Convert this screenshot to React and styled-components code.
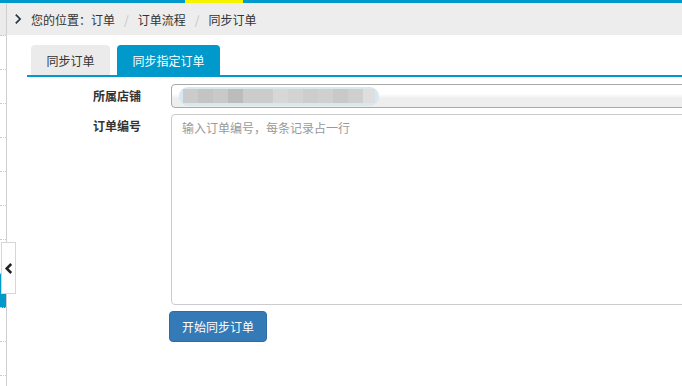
import React from "react";
import styled, { createGlobalStyle } from "styled-components";

const GlobalStyle = createGlobalStyle`
    html, body {
        margin: 0;
        padding: 0;
        background: #fff;
        overflow: hidden;
    }
    body {
        font-family: "Noto Sans CJK SC", "Noto Sans", sans-serif;
        font-size: 12px;
        color: #333;
    }
`;

const Page = styled.div`
    width: 682px;
    height: 386px;
    display: flex;
    flex-direction: column;
    overflow: hidden;
`;

const TopBar = styled.div`
    height: 3px;
    background: #0099cc;
    display: flex;
    padding-left: 185px;
    flex-shrink: 0;
`;

const TopMark = styled.div`
    width: 58px;
    height: 3px;
    background: #f5f500;
`;

const Body = styled.div`
    flex: 1;
    display: flex;
    min-height: 0;
`;

const Sidebar = styled.div`
    position: relative;
    width: 6px;
    border-right: 1px solid #cfcfcf;
    display: flex;
    flex-direction: column;
    flex-shrink: 0;
`;

const SideHead = styled.div`
    height: 32px;
    background: #ebebeb;
    border-bottom: 1px dotted #ccc;
`;

const SideItem = styled.div`
    height: 33px;
    flex-shrink: 0;
    border-bottom: 1px dotted #ccc;
    background: ${(p) => (p.active ? "#0099cc" : "#fff")};
`;

const Collapse = styled.div`
    position: absolute;
    left: 1px;
    top: 239px;
    width: 13px;
    height: 50px;
    background: #fff;
    border: 1px solid #d6d6d6;
    display: flex;
    align-items: center;
    justify-content: center;
    z-index: 2;
`;

const Main = styled.div`
    flex: 1;
    display: flex;
    flex-direction: column;
    min-width: 0;
`;

const Crumbs = styled.div`
    height: 32px;
    background: #ededed;
    display: flex;
    align-items: center;
    padding-left: 6px;
    flex-shrink: 0;
`;

const CrumbIcon = styled.span`
    display: flex;
    align-items: center;
    margin-right: 9px;
`;

const Crumb = styled.span`
    color: #333;
    font-size: 12px;
`;

const Sep = styled.span`
    color: #c4c4c4;
    margin: 0 9px;
`;

const Content = styled.div`
    padding: 10px 0 0 20px;
    display: flex;
    flex-direction: column;
`;

const Tabs = styled.div`
    display: flex;
    gap: 7px;
    padding-left: 4px;
    border-bottom: 2px solid #0099cc;
`;

const Tab = styled.div`
    height: 30px;
    display: flex;
    align-items: center;
    justify-content: center;
    border-radius: 4px 4px 0 0;
    background: ${(p) => (p.active ? "#0099cc" : "#ebebeb")};
    color: ${(p) => (p.active ? "#fff" : "#333")};
    font-size: 12px;
    width: ${(p) => p.w}px;
`;

const Form = styled.div`
    display: grid;
    grid-template-columns: 114px 560px;
    column-gap: 30px;
    row-gap: 6px;
    margin-top: 7px;
`;

const Label = styled.div`
    text-align: right;
    font-weight: bold;
    color: #333;
    font-size: 12px;
    line-height: 24px;
`;

const Select = styled.div`
    height: 24px;
    box-sizing: border-box;
    border: 1px solid #aaa;
    border-radius: 4px;
    background: linear-gradient(#fff 0%, #fff 40%, #eee 60%, #eee 100%);
    display: flex;
    align-items: center;
    padding-left: 7px;
`;

const Redacted = styled.div`
    display: flex;
    height: 19px;
    padding: 0 4px;
    background: #d6e9f1;
    border-radius: 9px;
    align-items: center;
    filter: blur(0.6px);
`;

const Block = styled.div`
    width: ${(p) => p.w}px;
    height: 14px;
    background: ${(p) => p.c};
`;

const Textarea = styled.div`
    height: 191px;
    box-sizing: border-box;
    border: 1px solid #ccc;
    border-radius: 4px;
    padding: 4px 10px;
    color: #999;
    font-size: 12px;
    line-height: 18px;
`;

const Button = styled.button`
    grid-column: 2;
    justify-self: start;
    margin-left: -2px;
    width: 98px;
    height: 31px;
    border: 1px solid #2e6da4;
    border-radius: 4px;
    background: #337ab7;
    color: #fff;
    font-family: inherit;
    font-size: 12px;
    padding: 0;
    cursor: pointer;
`;

const blocks = [
    ["#cbcbcb", 15], ["#c4c4c4", 15], ["#c9c9c9", 15], ["#bcbcbc", 15],
    ["#cccccc", 30], ["#d7d7d7", 15], ["#d3d3d3", 15], ["#cdcdcd", 15],
    ["#d0d0d0", 15], ["#c9c9c9", 15], ["#cfcfcf", 15], ["#dedede", 12],
];

const sideItems = [0, 1, 2, 3, 4, 5, 6, 7, 8, 9];

const Chevron = ({ dir = "right", w = 10, h = 10, stroke = "#333", width = 2 }) => (
    <svg width={w} height={h} viewBox="0 0 10 14">
        <path
            d={dir === "right" ? "M3 2 L8 7 L3 12" : "M8 2 L3 7 L8 12"}
            fill="none"
            stroke={stroke}
            strokeWidth={width}
        />
    </svg>
);

export default function App() {
    return (
        <>
            <GlobalStyle />
            <Page>
                <TopBar>
                    <TopMark />
                </TopBar>
                <Body>
                    <Sidebar>
                        <SideHead />
                        {sideItems.map((i) => (
                            <SideItem key={i} active={i === 7} />
                        ))}
                        <Collapse>
                            <Chevron dir="left" w={9} h={13} stroke="#222" width={2.8} />
                        </Collapse>
                    </Sidebar>
                    <Main>
                        <Crumbs>
                            <CrumbIcon>
                                <Chevron dir="right" w={9} h={12} stroke="#2a3640" width={2} />
                            </CrumbIcon>
                            <Crumb>您的位置：订单</Crumb>
                            <Sep>/</Sep>
                            <Crumb>订单流程</Crumb>
                            <Sep>/</Sep>
                            <Crumb>同步订单</Crumb>
                        </Crumbs>
                        <Content>
                            <Tabs>
                                <Tab w={79}>同步订单</Tab>
                                <Tab active w={103}>同步指定订单</Tab>
                            </Tabs>
                            <Form>
                                <Label>所属店铺</Label>
                                <Select>
                                    <Redacted>
                                        {blocks.map(([c, w], i) => (
                                            <Block key={i} c={c} w={w} />
                                        ))}
                                    </Redacted>
                                </Select>
                                <Label>订单编号</Label>
                                <Textarea>输入订单编号，每条记录占一行</Textarea>
                                <Button>开始同步订单</Button>
                            </Form>
                        </Content>
                    </Main>
                </Body>
            </Page>
        </>
    );
}
